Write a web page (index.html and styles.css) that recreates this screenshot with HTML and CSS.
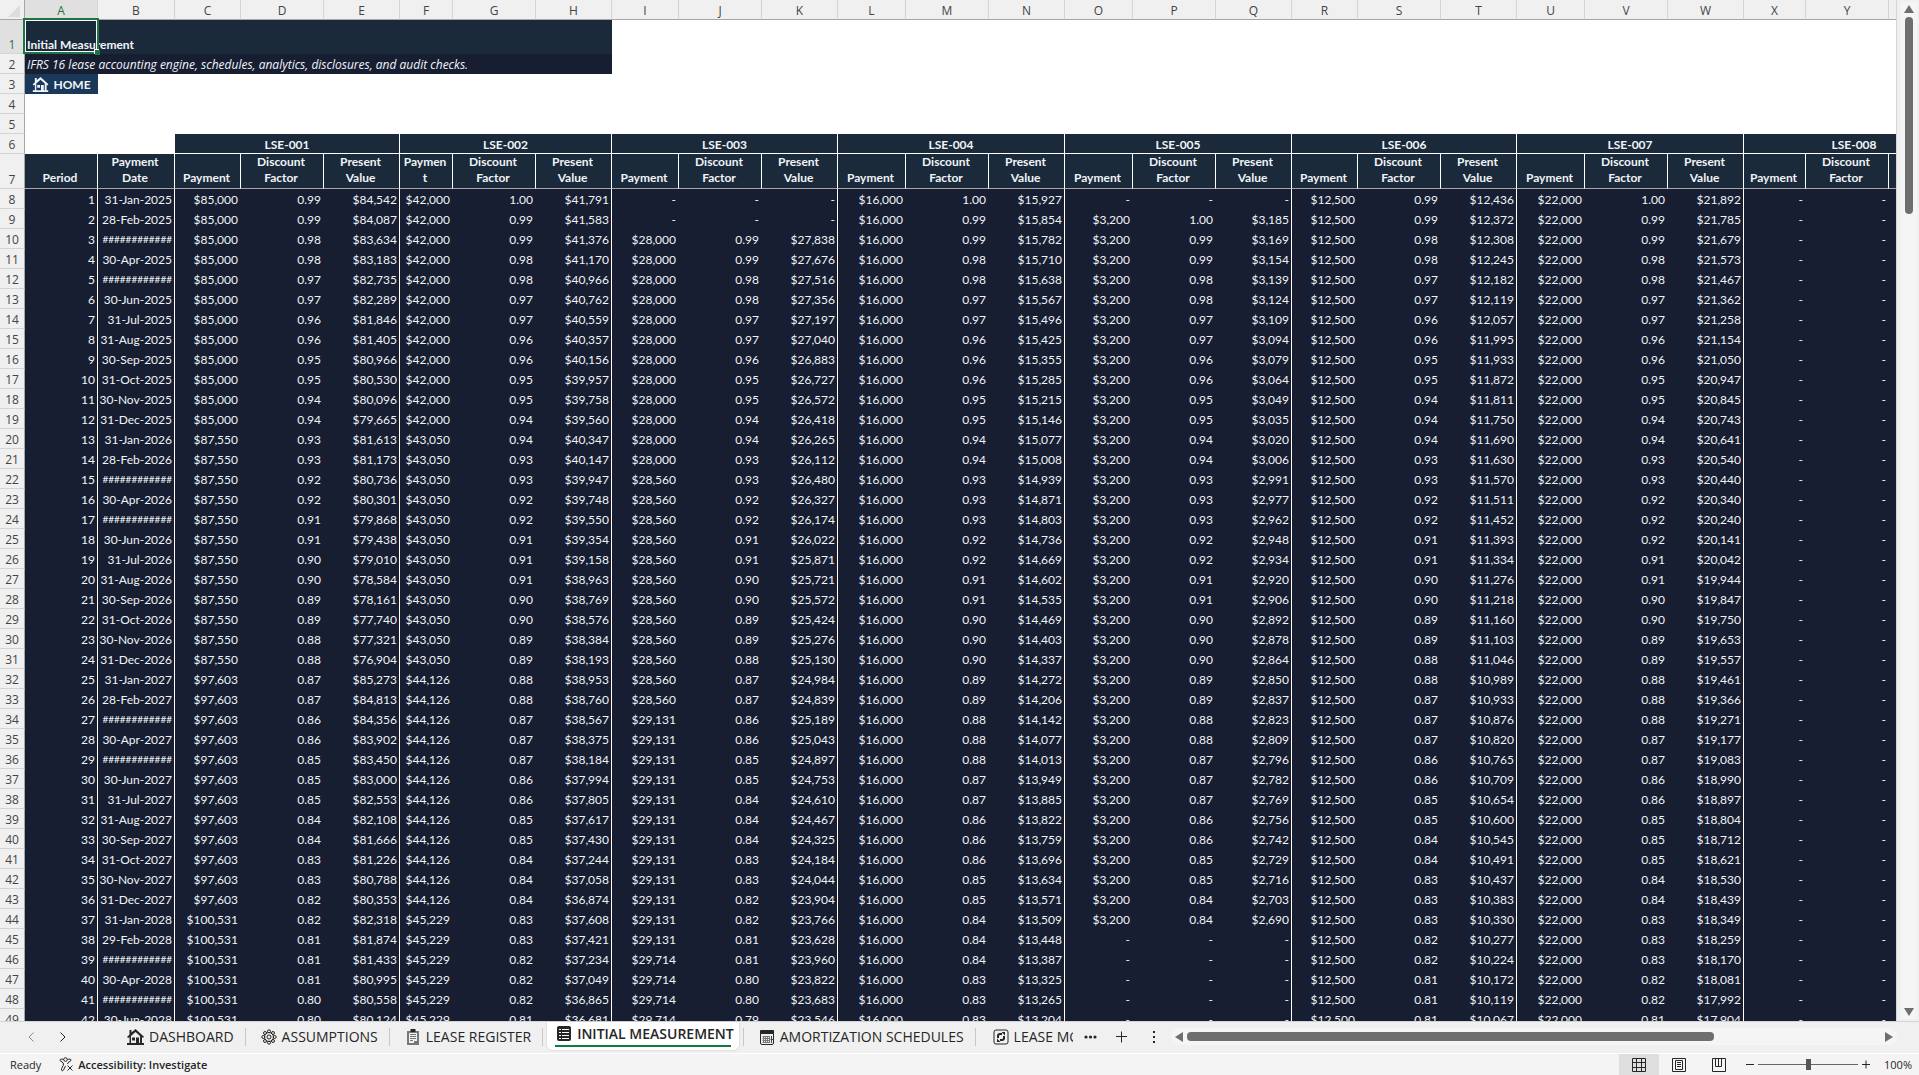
FILE: index.html
```html
<!DOCTYPE html>
<html lang="en">
<head>
<meta charset="utf-8">
<title>Initial Measurement</title>
<link rel="stylesheet" href="styles.css">
</head>
<body>
<main class="workspace">
  <div class="sheet">
    <table class="grid">
      <colgroup id="cols"></colgroup>
      <thead id="head"></thead>
      <tbody id="rows"></tbody>
    </table>
    <div class="cursor"><span class="cursor-handle"></span></div>
  </div>
  <div class="vscroll">
    <button class="arrow" aria-label="Scroll up"><svg width="10" height="8" viewBox="0 0 10 8"><path d="M5 0 10 8H0Z"/></svg></button>
    <div class="vtrack"><div class="vthumb"></div></div>
    <button class="arrow" aria-label="Scroll down"><svg width="10" height="8" viewBox="0 0 10 8"><path d="M0 0H10L5 8Z"/></svg></button>
  </div>
</main>

<nav class="tabbar">
  <div class="tab-arrows">
    <button class="plain dim" aria-label="Previous sheet"><svg width="8" height="12" viewBox="0 0 8 12"><path class="line" d="M6.500 1.500 2 6l4.500 4.500"/></svg></button>
    <button class="plain" aria-label="Next sheet"><svg width="8" height="12" viewBox="0 0 8 12"><path class="line" d="M1.500 1.500 6 6l-4.500 4.500"/></svg></button>
  </div>
  <button class="tab"><svg width="17" height="16" viewBox="0 0 17 16"><use href="#house"/></svg>DASHBOARD</button>
  <button class="tab"><svg width="16" height="16" viewBox="0 0 16 16"><circle class="line" cx="8" cy="8" r="4.500"/><circle class="line" cx="8" cy="8" r="2"/><g class="line"><circle cx="8" cy="2.300" r="1.500"/><circle cx="8" cy="13.700" r="1.500"/><circle cx="2.300" cy="8" r="1.500"/><circle cx="13.700" cy="8" r="1.500"/><circle cx="4" cy="4" r="1.500"/><circle cx="12" cy="4" r="1.500"/><circle cx="4" cy="12" r="1.500"/><circle cx="12" cy="12" r="1.500"/></g></svg>ASSUMPTIONS</button>
  <button class="tab"><svg width="16" height="16" viewBox="0 0 16 16"><path fill="#777" fill-rule="evenodd" d="M2 2h12v14H2ZM4 4v10h5v-2h3V4Z"/><path d="M5.500 0h5v3h-5z"/><path stroke="#777" d="M5 5.500h6M5 7.500h6M5 9.500h6M5 11.500h3"/></svg>LEASE REGISTER</button>
  <button class="tab active" aria-current="page"><svg width="16" height="15" viewBox="0 0 16 15"><rect x="1" y="0" width="14" height="15" rx="2"/><path class="gap" d="M3 3.500h2M6 3.500h7M3 6.500h2M6 6.500h7M3 9.500h2M6 9.500h7M3 12.500h2M6 12.500h7"/></svg>INITIAL MEASUREMENT</button>
  <button class="tab after"><svg width="16" height="16" viewBox="0 0 16 16"><rect class="line" x="1.500" y="1.500" width="13" height="14" rx="1.500"/><path d="M1 2q0-1 1-1h12q1 0 1 1v3H1z"/><path stroke="#777" fill="none" d="M3.500 7.500h7M3.500 9.500h7M3.500 11.500h7M3.500 13.500h7M4.500 7v7M6.500 7v7M8.500 7v7M10.500 7v7"/><path stroke="#444" d="M12.500 7v7M11.500 10.500h3"/></svg>AMORTIZATION SCHEDULES</button>
  <button class="tab last"><svg width="16" height="16" viewBox="0 0 16 16"><rect class="line" x="1" y="1" width="14" height="14" rx="2"/><path class="thick" d="M5 9V7q0-2 2-2h2M11 7v2q0 2-2 2H7"/><path d="M8.500 3h3.500v3.500ZM7.500 13H4V9.500Z"/></svg><span class="cut">LEASE MODIFICATIONS</span></button>
  <button class="plain more" aria-label="More sheets"><svg width="13" height="4" viewBox="0 0 13 4"><circle cx="2" cy="2" r="1.600"/><circle cx="6.500" cy="2" r="1.600"/><circle cx="11" cy="2" r="1.600"/></svg></button>
  <button class="plain add" aria-label="New sheet"><svg width="12" height="12" viewBox="0 0 12 12"><path class="line" d="M5.500 .500v11M0 5.500h11"/></svg></button>
  <span class="grip"><svg width="3" height="12" viewBox="0 0 3 12"><path d="M0 0h2v2H0zM0 5h2v2H0zM0 10h2v2H0z"/></svg></span>
  <div class="hscroll">
    <button class="arrow" aria-label="Scroll left"><svg width="8" height="10" viewBox="0 0 8 10"><path d="M8 0V10L0 5Z"/></svg></button>
    <div class="htrack"><div class="hthumb"></div></div>
    <button class="arrow" aria-label="Scroll right"><svg width="8" height="10" viewBox="0 0 8 10"><path d="M0 0V10L8 5Z"/></svg></button>
  </div>
</nav>

<footer class="status">
  <span class="ready">Ready</span>
  <button class="access"><svg width="15" height="15" viewBox="0 0 15 15"><circle class="line" cx="6.500" cy="2.500" r="1.800"/><path class="line" d="M4.500 2.500C2 1.500.500 2.500 1 3.500c.5 1 3.500 1.500 3.500 3.500 0 2-2.500 4.500-2 6 .5 1.200 1.500.8 2 0L6.500 9M8.500 2.500c2.500-1 4 0 3.500 1-.5 1-3.500 1.500-3.500 3.500M8.500 8.500l5 5M13.500 8.500l-5 5"/></svg>Accessibility: Investigate</button>
  <div class="views">
    <button class="view on" aria-label="Normal view"><svg width="14" height="14" viewBox="0 0 14 14"><path class="line" d="M.500.500h13v13H.500zM4.500.500v13M9.500.500v13M.500 4.500h13M.500 9.500h13"/></svg></button>
    <button class="view" aria-label="Page layout"><svg width="14" height="14" viewBox="0 0 14 14"><path class="line" d="M.500.500h13v13H.500zM3.500 2.500h7v9h-7zM5 4.500h4M5 6.500h4M5 8.500h4"/></svg></button>
    <button class="view" aria-label="Page break preview"><svg width="14" height="14" viewBox="0 0 14 14"><path class="line" d="M.500.500h13v13H.500zM3.500.500v8h6v-8M6.500 .500v8"/></svg></button>
  </div>
  <div class="zoom">
    <button class="plain" aria-label="Zoom out"><svg width="8" height="12" viewBox="0 0 8 12"><path class="line" d="M0 5.500h8"/></svg></button>
    <input class="slider" type="range" min="0" max="200" value="101" aria-label="Zoom">
    <button class="plain" aria-label="Zoom in"><svg width="8" height="12" viewBox="0 0 8 12"><path class="line" d="M0 5.500h8M4 1.500v8"/></svg></button>
    <span class="percent">100%</span>
  </div>
</footer>

<svg class="defs" width="0" height="0" aria-hidden="true">
  <symbol id="house" viewBox="0 0 17 16"><path d="M8.500 0 4.500 3.500V1H2.500V5.500L0 8l1.200 1L2.500 8V14H0v2H17V14H15V8l1 1 1-1.200ZM4 7l4.500-4L13 7v7H12V8.500H9V14H4ZM5 8.500v3H8v-3Z" fill-rule="evenodd"/></symbol>
</svg>
<script src="sheet.js"></script>
</body>
</html>
```
FILE: styles.css
```css
* { box-sizing: border-box; }

body {
  margin: 0;
  height: 100vh;
  display: flex;
  flex-direction: column;
  overflow: hidden;
  background: #f0f0f0;
  color: #262626;
  font-family: "Open Sans", "Noto Sans", sans-serif;
  font-size: 14px;
}

button {
  margin: 0;
  padding: 0;
  border: 0;
  background: none;
  color: inherit;
  font: inherit;
}

svg { display: block; flex: none; fill: currentColor; }
.line { fill: none; stroke: currentColor; stroke-width: 1; }
.thick { fill: none; stroke: currentColor; stroke-width: 2; }
.gap { fill: none; stroke: #fff; stroke-width: 1; }
.defs { position: absolute; }

/* Worksheet */
.workspace { flex: 1; min-height: 0; display: flex; }

.sheet {
  position: relative;
  flex: 1;
  min-width: 0;
  overflow: hidden;
  background: #fff;
  border-right: 1px solid #d4d4d4;
}

.grid {
  table-layout: fixed;
  width: 0;
  border-collapse: separate;
  border-spacing: 0;
  font-family: Lato, "Open Sans", sans-serif;
  font-size: 12px;
  line-height: 17px;
}

.grid th, .grid td { padding: 0; overflow: hidden; white-space: nowrap; }
.grid tr { height: 20px; }
.grid tr.title { height: 34px; }
.grid tr.labels { height: 35px; }

.grid .col-head, .grid .row-head {
  background: #f0f0f0;
  color: #444;
  font-family: "Open Sans", "Noto Sans", sans-serif;
  font-size: 12px;
  font-weight: 400;
  text-align: center;
}
.grid .col-head { border-right: 1px solid #d4d4d4; border-bottom: 1px solid #a6a6a6; padding-top: 3px; line-height: 16px; }
.grid .row-head { border-right: 1px solid #a6a6a6; border-bottom: 1px solid #d4d4d4; vertical-align: bottom; }
.grid .picked { background: #e0e0e0; color: #217346; }
.grid .corner { border-right-color: #a6a6a6; }
.corner svg { margin: 0 3px 0 auto; fill: #dcdcdc; }

.grid .banner { background: #1b2a3a; color: #f0f4f8; font-weight: 700; text-align: left; vertical-align: bottom; padding: 0 0 1px 2px; }
.grid .tagline { background: #171e31; color: #f0f4f8; font-family: "Open Sans", "Noto Sans", sans-serif; font-style: italic; padding-left: 2px; }
.grid .home { background: #1a385a; color: #f0f4f8; font-weight: 700; }
.home a { display: flex; align-items: center; justify-content: center; gap: 4px; color: inherit; text-decoration: none; }

.grid .lease, .grid .label { background: #1b2a3a; color: #f0f4f8; font-weight: 700; text-align: center; vertical-align: bottom; }
.grid .lease { border-right: 1px solid #fff; border-bottom: 1px solid #fff; }
.grid .label { border-right: 1px solid #fff; border-bottom: 1px solid #a6a6a6; white-space: normal; overflow-wrap: anywhere; padding: 0 4px 0 2px; line-height: 16px; vertical-align: top; }
.grid .label.single { padding-top: 16px; }

.grid .num { background: #171e31; color: #f0f4f8; text-align: right; vertical-align: bottom; padding-right: 3px; line-height: 19px; }
.grid .edge { border-right: 1px solid #fff; padding-right: 2px; }
.grid .hash { font-size: 10px; }

.cursor {
  position: absolute;
  left: 23px;
  top: 18px;
  width: 76px;
  height: 36px;
  border: 2px solid #217346;
  box-shadow: inset 0 0 0 1px #fff;
}
.cursor-handle {
  position: absolute;
  right: -3px;
  bottom: -3px;
  width: 5px;
  height: 5px;
  background: #217346;
  box-shadow: -1px -1px 0 #fff;
}

/* Scroll bars */
.vscroll { width: 22px; padding: 2px 3px 2px 4px; display: flex; flex-direction: column; align-items: center; }
.vscroll .arrow { width: 16px; height: 14px; display: flex; align-items: center; justify-content: center; color: #6e6e6e; background: #f5f5f5; }
.vtrack { flex: 1; width: 16px; padding: 1px 4px; background: #f5f5f5; }
.vthumb { width: 8px; height: 20%; border-radius: 4px; background: #6e6e6e; }

.hscroll { flex: 1; height: 17px; display: flex; align-items: center; gap: 4px; padding: 0 4px; border-radius: 8px; background: #f5f5f5; color: #6e6e6e; }
.htrack { flex: 1; }
.hthumb { width: 76%; height: 9px; border-radius: 4px; background: #6e6e6e; }

/* Sheet tabs */
.tabbar {
  height: 33px;
  display: flex;
  align-items: center;
  padding: 0 22px 2px 0;
  border-top: 1px solid #d4d4d4;
  border-bottom: 1px solid #fff;
}
.plain { display: flex; align-items: center; justify-content: center; }
.dim { color: #8a8a8a; }
.tab-arrows { display: flex; gap: 24px; width: 112px; padding-left: 27px; }
.tab {
  display: flex;
  align-items: center;
  gap: 5px;
  height: 18px;
  padding: 0 11px 0 15px;
  border-right: 1px solid #c8c8c8;
  white-space: nowrap;
}
.tab.active {
  align-self: flex-start;
  height: 28px;
  margin: 0 4px;
  padding: 0 5px 5px 9px;
  border: 0;
  border-radius: 0 0 5px 5px;
  background: linear-gradient(#107c41, #107c41) 8px 23px / calc(100% - 16px) 2px no-repeat #fff;
  box-shadow: 0 0 2px #bbb;
  font-weight: 600;
}
.tab.after { border-left: 1px solid #c8c8c8; }
.tab.last { border: 0; padding: 0 0 0 17px; }
.cut { width: 59px; overflow: hidden; text-align: left; }
.more { margin-left: 11px; }
.add { margin-left: 19px; }
.grip { margin: 0 15px 0 25px; }

/* Status bar */
.status { height: 21px; display: flex; align-items: center; background: #f4f4f4; font-size: 11px; padding-right: 7px; }
.ready { padding-left: 10px; }
.access { display: flex; align-items: center; gap: 4px; margin-left: 18px; font-weight: 600; }
.views { display: flex; margin-left: auto; align-self: stretch; }
.view { width: 40px; display: flex; align-items: center; justify-content: center; }
.view.on { background: #dedede; }
.zoom { display: flex; align-items: center; margin-left: 7px; gap: 4px; }
.slider { appearance: none; width: 100px; height: 12px; margin: 0; background: linear-gradient(#666, #666) 0 5px / 100% 1px no-repeat; }
.slider::-webkit-slider-thumb { appearance: none; width: 5px; height: 11px; background: #555; }
.percent { margin-left: 10px; }
```
FILE: sheet.js
```js
const widths = [25, 73, 77, 66, 83, 76, 53, 83, 76, 67, 83, 76, 68, 83, 76, 68, 83, 76, 66, 83, 76, 68, 83, 76, 62, 83, 76];

// first/last: payment periods; steps: payment for each 12-month block
const leases = [
  { name: "LSE-001", rate: 0.065, first: 1, last: 60, steps: [85000, 87550, 97602.6, 100530.8] },
  { name: "LSE-002", rate: 0.06, first: 1, last: 60, steps: [42000, 43050, 44126.25, 45229.41] },
  { name: "LSE-003", rate: 0.07, first: 3, last: 60, steps: [28000, 28560, 29131.2, 29713.82] },
  { name: "LSE-004", rate: 0.055, first: 1, last: 60, steps: [16000] },
  { name: "LSE-005", rate: 0.058, first: 2, last: 37, steps: [3200] },
  { name: "LSE-006", rate: 0.062, first: 1, last: 60, steps: [12500] },
  { name: "LSE-007", rate: 0.059, first: 1, last: 60, steps: [22000] },
  { name: "LSE-008", rate: 0.06, first: 61, last: 61, steps: [0] }
];
const months = ["Jan", "Feb", "Mar", "Apr", "May", "Jun", "Jul", "Aug", "Sep", "Oct", "Nov", "Dec"];
const money = v => "$" + Math.round(v).toLocaleString("en-US");
const rowHead = (n, cls = "") => `<th class="row-head ${cls}" scope="row">${n}</th>`;

const hidden = i => i === leases.length - 1;

document.getElementById("cols").innerHTML = widths.map(w => `<col style="width:${w}px">`).join("");

document.getElementById("head").innerHTML =
  `<tr><th class="col-head corner"><svg width="13" height="13" viewBox="0 0 13 13"><path d="M12 0V12H0Z"/></svg></th>` +
  widths.slice(1).map((w, i) => `<th class="col-head${i ? "" : " picked"}" scope="col">${i < 25 ? String.fromCharCode(65 + i) : ""}</th>`).join("") + "</tr>";

let html =
  `<tr class="title">${rowHead(1, "picked")}<td class="banner" colspan="8">Initial Measurement</td></tr>` +
  `<tr>${rowHead(2)}<td class="tagline" colspan="8">IFRS 16 lease accounting engine, schedules, analytics, disclosures, and audit checks.</td></tr>` +
  `<tr>${rowHead(3)}<td class="home"><a href="#"><svg width="17" height="15" viewBox="0 0 17 16"><use href="#house"/></svg>HOME</a></td></tr>` +
  `<tr>${rowHead(4)}</tr><tr>${rowHead(5)}</tr>` +
  `<tr>${rowHead(6)}<td colspan="2"></td>${leases.map(l => `<th class="lease" colspan="3">${l.name}</th>`).join("")}</tr>` +
  `<tr class="labels">${rowHead(7)}<th class="label single">Period</th><th class="label">Payment Date</th>` +
  leases.map((l, i) => `<th class="label${i === 1 ? "" : " single"}">Payment</th><th class="label">Discount Factor</th><th class="label">${hidden(i) ? "" : "Present Value"}</th>`).join("") + "</tr>";

for (let p = 1; p <= 42; p++) {
  const month = (p - 1) % 12;
  const year = 2025 + Math.floor((p - 1) / 12);
  const day = new Date(year, month + 1, 0).getDate();
  const wide = month === 2 || month === 4;
  const date = wide ? "############" : `${day}-${months[month]}-${year}`;
  html += `<tr>${rowHead(p + 7)}<td class="num edge">${p}</td><td class="num edge${wide ? " hash" : ""}">${date}</td>`;
  leases.forEach((l, i) => {
    let cells = ["-", "-", "-"];
    if (p >= l.first && p <= l.last) {
      const n = p - l.first + 1;
      const pay = l.steps[Math.min(l.steps.length - 1, Math.floor((n - 1) / 12))];
      const factor = Math.pow(1 + l.rate / 12, -n);
      cells = [money(pay), factor.toFixed(2), money(pay * factor)];
    }
    if (hidden(i)) cells[2] = "";
    html += `<td class="num">${cells[0]}</td><td class="num">${cells[1]}</td><td class="num edge">${cells[2]}</td>`;
  });
  html += "</tr>";
}
document.getElementById("rows").innerHTML = html;
```
